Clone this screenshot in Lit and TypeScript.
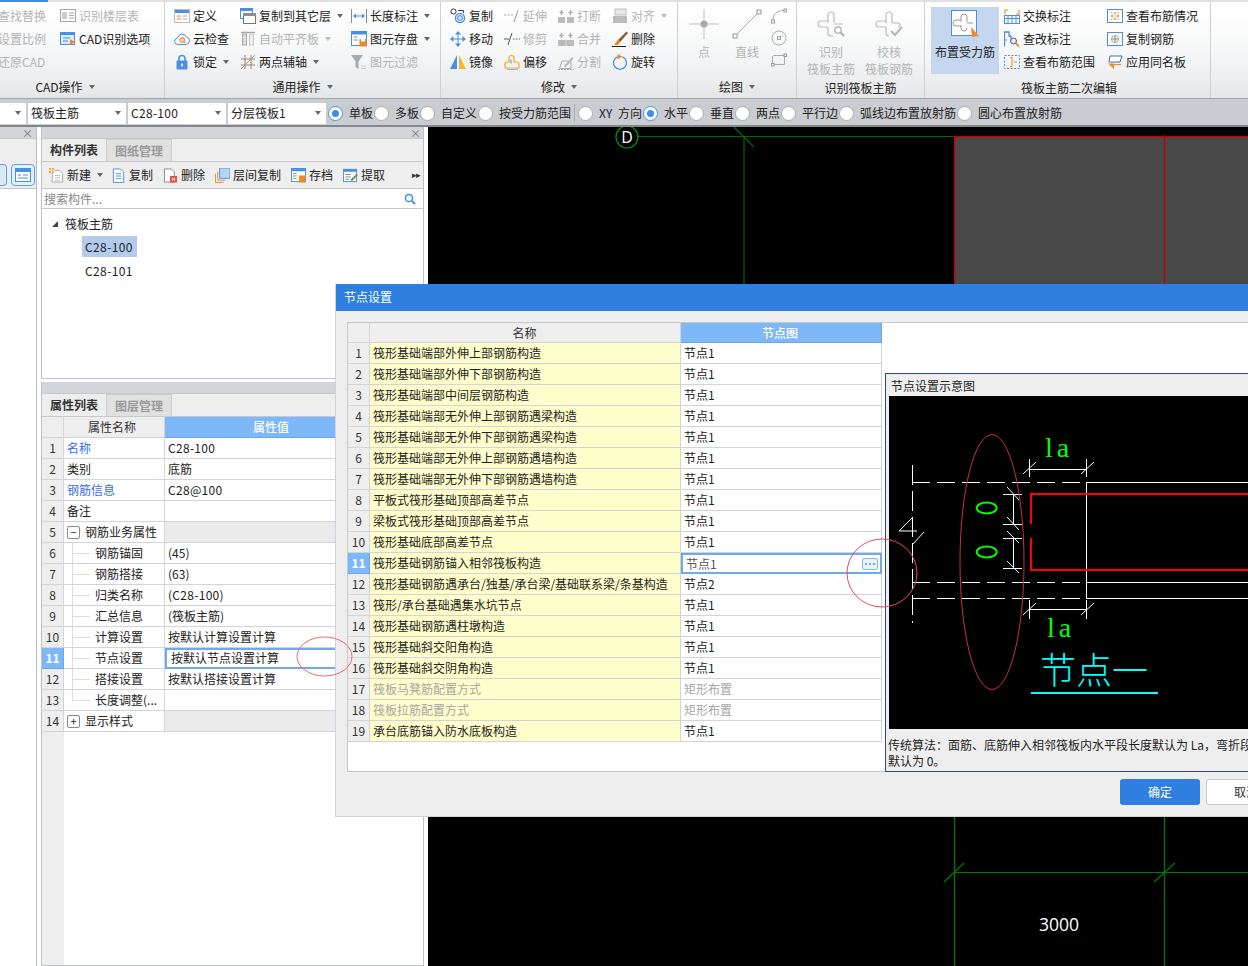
import { LitElement, html, css, nothing } from "lit";
import { customElement } from "lit/decorators.js";

const B = "#4a90e2", O = "#f0882a", G = "#a8a8a8";

const ICONS: Record<string, any> = {
  floor: html`<svg class="i" viewBox="0 0 16 16" fill="none"><rect x=".5" y="1.5" width="15" height="12" stroke="${G}"/><rect x="2" y="4" width="5" height="7" fill="#ccc"/><path d="M9 5h5M9 7.5h5M9 10h5" stroke="${G}"/></svg>`,
  cadopt: html`<svg class="i" viewBox="0 0 16 16" fill="none"><rect x=".5" y="1.5" width="14" height="12" fill="#dbe9f9" stroke="${B}"/><rect x="0" y="1" width="15" height="3" fill="${B}"/><path d="M3 7h7M3 10h5" stroke="${B}"/><path d="M10 8l5 3-5 3z" fill="${O}"/></svg>`,
  def: html`<svg class="i" viewBox="0 0 16 16" fill="none"><rect x=".5" y="1.5" width="15" height="13" fill="#fff" stroke="#bbb"/><rect x="1" y="2" width="14" height="3" fill="${B}"/><path d="M3 8h4M3 11h4" stroke="${O}"/><path d="M9 8h4M9 11h4" stroke="#aaa"/></svg>`,
  cloud: html`<svg class="i" viewBox="0 0 16 16" fill="none"><path d="M4 13.5a3.2 3.2 0 0 1-.4-6.4A4.6 4.6 0 0 1 12.4 6a3.8 3.8 0 0 1-.2 7.5z" stroke="${B}"/><circle cx="8.2" cy="9" r="2.2" stroke="${O}" stroke-width="1.2"/><path d="M10 10.6l1.5 1.5" stroke="${O}" stroke-width="1.2"/></svg>`,
  lock: html`<svg class="i" viewBox="0 0 16 16" fill="none"><path d="M5 7V4.5a3 3 0 0 1 6 0V7" stroke="${B}" stroke-width="1.6"/><rect x="2.5" y="6.5" width="11" height="9" rx="1" fill="${B}"/><rect x="7.2" y="9.5" width="1.6" height="3" fill="#fff"/></svg>`,
  cplayer: html`<svg class="i" viewBox="0 0 16 16" fill="none"><rect x=".5" y=".5" width="12" height="10" fill="#fff" stroke="${B}"/><rect x="0" y="0" width="13" height="3" fill="${B}"/><rect x="3.5" y="5.5" width="12" height="10" fill="#fff" stroke="#777"/><rect x="3" y="5" width="13" height="3" fill="#8a8f95"/></svg>`,
  autoflat: html`<svg class="i" viewBox="0 0 16 16" fill="none"><path d="M1 1.5h14" stroke="${G}" stroke-width="1.4"/><rect x="2.5" y="3" width="4" height="11" fill="#ddd" stroke="${G}"/><rect x="9.5" y="3" width="4" height="11" fill="#eee" stroke="#c8c8c8"/></svg>`,
  axis: html`<svg class="i" viewBox="0 0 16 16" fill="none"><path d="M5 1v14M11 1v14M1 5h14M1 11h14" stroke="#888"/><path d="M1 15L15 1" stroke="${O}"/></svg>`,
  len: html`<svg class="i" viewBox="0 0 16 16" fill="none"><path d="M.5 1v14M15.5 1v14" stroke="#888"/><path d="M3 8h10" stroke="${B}"/><path d="M2 8l3-2.5v5zM14 8l-3-2.5v5z" fill="${B}"/></svg>`,
  save: html`<svg class="i" viewBox="0 0 16 16" fill="none"><rect x=".5" y=".5" width="15" height="14" fill="#fff" stroke="${B}"/><rect x="0" y="0" width="16" height="3.5" fill="${B}"/><path d="M2.5 6h4M2.5 9h4" stroke="#888"/><rect x="8.5" y="8" width="7" height="7.5" fill="${O}"/><rect x="10" y="8" width="4" height="2.5" fill="#fff"/></svg>`,
  filter: html`<svg class="i" viewBox="0 0 16 16" fill="none"><path d="M0 1h12L7.5 7.5V15l-3-2V7.5z" fill="#aaa"/><path d="M10 12h5M10 14.5h5" stroke="#ccc"/></svg>`,
  copy: html`<svg class="i" viewBox="0 0 16 16" fill="none"><circle cx="3.5" cy="3.5" r="2.6" stroke="#333"/><circle cx="10" cy="10" r="4.6" fill="#cfe2f8" stroke="${B}" stroke-width="1.3"/><circle cx="10" cy="10" r="2.4" stroke="${B}"/><path d="M8 2.5h5.5V5" stroke="#444"/></svg>`,
  extend: html`<svg class="i" viewBox="0 0 16 16" fill="none"><path d="M0 7h2M3.500 7h2M7 7h2" stroke="#aaa"/><path d="M10 14L14 2" stroke="#999"/></svg>`,
  trim: html`<svg class="i" viewBox="0 0 16 16" fill="none"><path d="M0 8h5M9 8h1.500M12 8h1.500M15 8h1" stroke="#555"/><path d="M4 14L8 2" stroke="#555"/></svg>`,
  brk: html`<svg class="i" viewBox="0 0 16 16" fill="none"><rect x="0" y="9" width="7" height="6" fill="#bbb"/><rect x="9" y="9" width="7" height="6" fill="#bbb"/><path d="M3.500 2v5M12.500 2v5M1.500 4.500h4M10.500 4.500h4" stroke="#aaa" stroke-width="1.300"/></svg>`,
  merge: html`<svg class="i" viewBox="0 0 16 16" fill="none"><rect x="0" y="9" width="16" height="6" fill="#bbb"/><path d="M8 9v6" stroke="#ddd"/><path d="M3.500 2v5M12.500 2v5M1.500 4.500h4M10.500 4.500h4" stroke="#aaa" stroke-width="1.300"/></svg>`,
  split: html`<svg class="i" viewBox="0 0 16 16" fill="none"><path d="M1.500 14.500L4 7h9v7.500z" stroke="#aaa"/><path d="M6 12L14 3l1.500 1.500-8 9z" fill="#bbb"/><path d="M0 15.500h16" stroke="#aaa" stroke-dasharray="2 1"/></svg>`,
  align: html`<svg class="i" viewBox="0 0 16 16" fill="none"><rect x="3" y="1" width="11" height="6" fill="#e8e8e8" stroke="#bbb"/><rect x="1" y="8" width="14" height="7" fill="#bbb"/></svg>`,
  move: html`<svg class="i" viewBox="0 0 16 16" fill="none"><path d="M8 3v10M3 8h10" stroke="${B}"/><path d="M8 0l3 3.500H5zM8 16l3-3.500H5zM0 8l3.500-3v6zM16 8l-3.500-3v6z" fill="${B}"/></svg>`,
  mirror: html`<svg class="i" viewBox="0 0 16 16" fill="none"><path d="M7 1v14H0z" fill="${B}"/><path d="M9 1v14h7z" fill="#f5b62a"/></svg>`,
  offset: html`<svg class="i" viewBox="0 0 16 16" fill="none"><path d="M1 14V10c0-1.500 1-2 3-2h1V4a2.500 2.500 0 0 1 5 0v4h2c2 0 3 .5 3 2v4z" stroke="#f5a623" stroke-width="1.200"/><path d="M3 16h11" stroke="${B}" stroke-width="1.200"/><path d="M7 5.500v4" stroke="${B}"/></svg>`,
  del: html`<svg class="i" viewBox="0 0 16 16" fill="none"><path d="M14.500.5L6 9l2 2 8-9z" fill="#8a5a2b"/><path d="M6 8.500l2.500 2.500-2.500 3H2z" fill="${O}"/><path d="M0 15.500h14" stroke="#222"/></svg>`,
  rotate: html`<svg class="i" viewBox="0 0 16 16" fill="none"><path d="M5.500 2.800a6.500 6.500 0 1 0 5 0" stroke="${B}" stroke-width="1.300"/><path d="M5.500 0l5 2.600-5 2.800z" fill="${O}"/></svg>`,
  small1: html`<svg class="i" viewBox="0 0 16 16" fill="none"><path d="M2 12C2 6 6 2.500 13 2.500" stroke="#aaa"/><rect x=".5" y="12" width="3" height="3" fill="#fff" stroke="#999"/><rect x="13" y="1" width="2.600" height="3" fill="#fff" stroke="#999"/></svg>`,
  small2: html`<svg class="i" viewBox="0 0 16 16" fill="none"><circle cx="8" cy="8" r="7" stroke="#aaa"/><path d="M8 8l4-3" stroke="#bbb"/><rect x="6.600" y="6.600" width="2.800" height="2.800" fill="#fff" stroke="#999"/></svg>`,
  small3: html`<svg class="i" viewBox="0 0 16 16" fill="none"><path d="M2.500 3.500H14M13.500 3v9.500H1.500V4" stroke="#aaa"/><rect x=".5" y="11.500" width="2.500" height="2.500" fill="#fff" stroke="#999"/><rect x="13" y="2" width="2.500" height="2.500" fill="#fff" stroke="#999"/></svg>`,
  xchg: html`<svg class="i" viewBox="0 0 16 16" fill="none"><rect x=".5" y="7.500" width="15" height="8" stroke="${B}"/><path d="M.5 10.500h15M4 8v7M8 8v7M12 8v7" stroke="${B}"/><path d="M1 6V2h3M15 2v4h-3" stroke="${O}" stroke-width="1.200"/></svg>`,
  chg: html`<svg class="i" viewBox="0 0 16 16" fill="none"><path d="M.5 15.500V1H5v4h2v3" stroke="${B}" stroke-width="1.300"/><path d="M.5 9H3" stroke="${B}"/><circle cx="9.500" cy="10" r="3" fill="#dbe9f9" stroke="#557"/><path d="M12 12.500l3 3" stroke="${O}" stroke-width="1.800"/></svg>`,
  range: html`<svg class="i" viewBox="0 0 16 16" fill="none"><rect x=".5" y="1.500" width="15" height="13" stroke="${B}" stroke-dasharray="2 1.500"/><path d="M6 3.500H8V12.500H6M10 8h3" stroke="${O}"/></svg>`,
  cond: html`<svg class="i" viewBox="0 0 16 16" fill="none"><rect x=".5" y="1.500" width="15" height="13" stroke="${B}"/><path d="M8 4v2.500M8 9.500V12M4 8h2.500M9.500 8H12" stroke="${O}" stroke-width="1.300"/><path d="M4 4l1.500 1.500M12 4l-1.500 1.500M4 12l1.500-1.500M12 12l-1.500-1.500" stroke="${O}"/></svg>`,
  cpreb: html`<svg class="i" viewBox="0 0 16 16" fill="none"><rect x=".5" y="1.500" width="15" height="13" stroke="${B}"/><path d="M8 4v8M4 8h8" stroke="#888"/><circle cx="8" cy="8" r="3.500" stroke="#aaa"/></svg>`,
  apply: html`<svg class="i" viewBox="0 0 16 16" fill="none"><path d="M3 2h12l-2 6H2z" fill="#fff" stroke="#3c6fb5"/><path d="M1 9.500h6V15z" fill="${O}"/><path d="M7 10.500h7" stroke="${O}" stroke-width="1.200"/></svg>`,
  pnew: html`<svg class="i" viewBox="0 0 16 16" fill="none"><path d="M3.500 2.500H11l3.500 3.500v9h-11z" fill="#fff" stroke="#aaa"/><path d="M6 8h6M6 10.500h6M6 13h6" stroke="#bbb"/><rect x="0" y="0" width="5.500" height="5.500" fill="#f7a74a"/><path d="M0 2.700h5.500M2.700 0v5.500" stroke="#fff" stroke-width=".8"/></svg>`,
  pcopy: html`<svg class="i" viewBox="0 0 16 16" fill="none"><path d="M2.500 1H10l3.500 3.500v11h-11z" fill="#fff" stroke="${B}"/><path d="M5 6h6M5 8.500h6M5 11h6" stroke="${B}"/></svg>`,
  pdel: html`<svg class="i" viewBox="0 0 16 16" fill="none"><path d="M1.500 1H9l3 3v11H1.500z" fill="#fff" stroke="#888"/><rect x="7.500" y="8.500" width="7.500" height="7" fill="#d9534f"/><path d="M9.500 10.500l3.500 3M13 10.500l-3.500 3" stroke="#fff"/></svg>`,
  pfloor: html`<svg class="i" viewBox="0 0 16 16" fill="none"><path d="M.5 6v9.500H9M3 4v9h8" stroke="${O}"/><rect x="5" y="0" width="11" height="11" fill="#b8d4f5" stroke="${B}"/></svg>`,
  parch: html`<svg class="i" viewBox="0 0 16 16" fill="none"><rect x=".5" y=".5" width="15" height="14" fill="#fff" stroke="${B}"/><rect x="0" y="0" width="16" height="3.500" fill="${B}"/><path d="M2 6h4M2 8.500h4M2 11h4" stroke="#888"/><rect x="8.500" y="8" width="7" height="7.500" fill="${O}"/></svg>`,
  pget: html`<svg class="i" viewBox="0 0 16 16" fill="none"><rect x=".5" y="1.500" width="14" height="13" fill="#fff" stroke="${B}"/><rect x="0" y="1" width="15" height="3" fill="${B}"/><path d="M2.500 7h6M2.500 9.500h6M2.500 12h4" stroke="#888"/><path d="M8 12.500L14.500 6l1.500 1.500L9.500 14z" fill="#6a8f5a"/></svg>`,
};

const BIG: Record<string, any> = {
  point: html`<svg class="big" viewBox="0 0 30 30" fill="none"><path d="M15 0v30M0 15h30" stroke="#bdbdbd"/><circle cx="15" cy="15" r="3.500" fill="#aaa"/></svg>`,
  line: html`<svg class="big" viewBox="0 0 30 30" fill="none"><path d="M3 27L27 3" stroke="#aaa"/><rect x="1" y="25" width="4" height="4" fill="#fff" stroke="#999"/><rect x="25" y="1" width="4" height="4" fill="#fff" stroke="#999"/></svg>`,
  ident: html`<svg class="mid" viewBox="0 0 26 26" fill="none"><path d="M10 12V4a3 3 0 0 1 6 0v8M10 16v6a3 3 0 0 0 3 3h2M3 10h7M3 16h7M3 10a3 3 0 0 0 0 6M16 13h9" stroke="#bbb" stroke-width="1.200"/><circle cx="20" cy="19" r="3.200" stroke="#aaa" stroke-width="1.200"/><path d="M22.500 21.500L26 25" stroke="#999" stroke-width="1.600"/></svg>`,
  check: html`<svg class="mid" viewBox="0 0 26 26" fill="none"><path d="M10 12V4a3 3 0 0 1 6 0v8M10 16v6a3 3 0 0 0 3 3M3 10h7M3 16h7M3 10a3 3 0 0 0 0 6M16 12h6a2 2 0 0 1 0 4" stroke="#bbb" stroke-width="1.200"/><path d="M15 20l4 4 7-8" stroke="#b5b5b5" stroke-width="2"/></svg>`,
  place: html`<svg class="mid place" viewBox="0 0 26 26" fill="none"><rect x=".5" y=".5" width="25" height="25" fill="#fff" stroke="${B}"/><path d="M10 12V7a3 3 0 0 1 6 0v5M10 15v3a3 3 0 0 0 6 0M5 10h5M5 16h5M5 10a3 3 0 0 0 0 6M16 13h6" stroke="#999"/><path d="M20 17L28 26L21 27z" fill="${O}"/></svg>`,
};

type It = [string, string, boolean?, boolean?];

const name1 = ["筏形基础端部外伸上部钢筋构造","筏形基础端部外伸下部钢筋构造","筏形基础端部中间层钢筋构造","筏形基础端部无外伸上部钢筋遇梁构造","筏形基础端部无外伸下部钢筋遇梁构造","筏形基础端部无外伸上部钢筋遇墙构造","筏形基础端部无外伸下部钢筋遇墙构造","平板式筏形基础顶部高差节点","梁板式筏形基础顶部高差节点","筏形基础底部高差节点","筏形基础钢筋锚入相邻筏板构造","筏形基础钢筋遇承台/独基/承台梁/基础联系梁/条基构造","筏形/承台基础遇集水坑节点","筏形基础钢筋遇柱墩构造","筏形基础斜交阳角构造","筏形基础斜交阴角构造","筏板马凳筋配置方式","筏板拉筋配置方式","承台底筋锚入防水底板构造"];

const radios: [string, boolean, boolean?][] = [["单板",true],["多板",false],["自定义",false],["按受力筋范围",false,true],["XY 方向",false],["水平",true],["垂直",false],["两点",false],["平行边",false],["弧线边布置放射筋",false],["圆心布置放射筋",false]];

const props: any[] = [
  [1,"名称","C28-100","link"],[2,"类别","底筋"],[3,"钢筋信息","C28@100","link"],[4,"备注",""],
  [5,"钢筋业务属性","","minus"],[6,"钢筋锚固","(45)","child"],[7,"钢筋搭接","(63)","child"],[8,"归类名称","(C28-100)","child"],
  [9,"汇总信息","(筏板主筋)","child"],[10,"计算设置","按默认计算设置计算","child"],[11,"节点设置","按默认节点设置计算","child sel"],
  [12,"搭接设置","按默认搭接设置计算","child"],[13,"长度调整(...","","child last"],[14,"显示样式","","plus"],
];

@customElement("app-root")
export class AppRoot extends LitElement {
  static styles = css`
    :host{display:block;position:relative;width:1248px;height:966px;overflow:hidden;background:#fff;color:#222;
      font:12px/16px "Noto Sans CJK SC","Noto Sans",sans-serif;}
    *{box-sizing:border-box}
    .i{width:16px;height:16px;flex:none;display:block}
    .big{width:30px;height:30px;display:block}
    .mid{width:26px;height:26px;display:block;overflow:visible}
    .tri{width:0;height:0;border:3px solid transparent;border-top:4px solid #666;border-bottom:0;display:inline-block;flex:none}

    .ribbon{height:99px;width:1290px;margin-left:-30px;padding-top:2px;display:flex;position:relative;
      background:linear-gradient(#fff 10%,#f4f5f6 60%,#e4e6e8);border-bottom:1px solid #a2a5aa}
    .strip{position:absolute;left:0;top:0;width:100%;height:2px;background:#e0e0e0}
    .strip i{display:block;height:2px;width:78px;background:#3d8be6}
    .grp{display:flex;flex-direction:column;height:96px;border-right:1px solid #cdd1d5;flex:none;position:relative;z-index:1}
    .body{height:76px;display:flex}
    .glabel{height:18px;line-height:18px;display:flex;align-items:center;justify-content:center;gap:6px;color:#222}
    .col{display:flex;flex-direction:column;padding-top:2px;flex:none}
    .it{height:23px;display:flex;align-items:center;gap:3px;white-space:nowrap}
    .it .tri{margin-left:3px}
    .dis{color:#b4b4b4}
    .dis .tri{border-top-color:#bbb}
    .g1{width:195px}.g1 .c1{width:81px;margin-left:9px}
    .g1 .glabel{padding-right:4px}
    .g2{width:276px;padding-left:9px}.g2 .c1{width:66px}.g2 .c2{width:111px}
    .g2 .glabel,.g3 .glabel{margin-left:-9px}
    .g3{width:237px;padding-left:9px}.g3 .col{width:54px}
    .g4{width:119px;padding-left:11px}
    .g4 .glabel{margin-left:-11px}
    .bigb{display:flex;flex-direction:column;align-items:center;width:30px;padding-top:7px;flex:none}
    .bigb span{margin-top:5px;white-space:nowrap;color:#b4b4b4}
    .bigb.second{margin-left:13px}
    .smalls{margin-left:9px;padding-top:6px;display:flex;flex-direction:column;gap:6px;flex:none}
    .g5{width:128px;padding-left:5px}
    .g5 .glabel{margin-left:-5px}
    .midb{width:58px;display:flex;flex-direction:column;align-items:center;padding-top:9px;color:#b4b4b4;flex:none;line-height:17px;text-align:center}
    .midb .mid{margin-bottom:6px}
    .g6{width:286px;padding-left:6px}
    .g6 .glabel{margin-left:-3px}
    .active{width:68px;height:67px;margin-top:5px;background:#c5d7ef;display:flex;flex-direction:column;align-items:center;padding-top:3px;flex:none;white-space:nowrap}
    .active .mid{margin-bottom:8px;margin-left:-2px}
    .g6 .c1{width:103px;margin-left:5px}
    .lb2{padding-top:1px}

    .tb{height:28px;background:#c9ccd1;display:flex;align-items:center;padding:2px 0 0;border-bottom:2px solid #85878b}
    .sel{height:21px;width:98px;background:#fff;margin-right:2px;display:flex;align-items:center;justify-content:space-between;padding:0 5px 0 3px;white-space:nowrap;flex:none}
    .sel.first{width:26px}
    .radios{display:flex;align-items:center}
    .radio{width:15px;height:15px;border-radius:50%;background:#fff;border:1px solid #a8abb0;flex:none;display:flex;align-items:center;justify-content:center;margin-right:6px}
    .radio.on{border:1px solid #4a90e2}
    .radio.on::after{content:"";width:7px;height:7px;border-radius:50%;background:#3f8cf0}
    .rt{white-space:nowrap;margin-right:1px;word-spacing:3px}
    .rsep{width:1px;height:18px;background:#a9acb0;margin:0 3px 0 2px}

    .main{display:flex;height:839px}
    .lp{width:37px;flex:none;border-right:1px solid #b9bcc1;display:flex;flex-direction:column}
    .phead{height:12px;background:#d3d5da;display:flex;align-items:center;justify-content:flex-end;padding-right:3px;color:#777;font-size:11px;flex:none;border-bottom:1px solid #c6c8cc;line-height:10px}
    .lpbar{height:50px;background:#eee;border-bottom:1px solid #c4c6ca;display:flex;align-items:flex-start;padding:25px 0 0;gap:4px;margin-left:-1px;flex:none}
    .lbtn{height:22px;border:1px solid #5a9eea;border-radius:4px;background:#fff;display:flex;align-items:center;justify-content:center;flex:none}
    .lbtn.a{width:8px;background:#dbe9f9;border-left:0;border-radius:0 4px 4px 0}
    .lbtn.b{width:24px;background:#e6f0fb}
    .lbtn svg{width:16px;height:14px}
    .pcol{width:383px;flex:none;margin-left:4px;display:flex;flex-direction:column}
    .panel{border:1px solid #bfc2c6;border-top:0;display:flex;flex-direction:column}
    .p1{height:252px;flex:none}
    .p1 .phead{padding-right:2px}
    .p2{flex:1;margin-top:3px;min-height:0}
    .tabs{height:23px;background:#eee;display:flex;border-bottom:1px solid #c6c8cc;flex:none}
    .tab{height:22px;padding:0 8px;line-height:21px;font-weight:700;color:#333;width:64px;flex:none;white-space:nowrap}
    .tab.off{background:#e1e1e1;color:#999;border:1px solid #cdcdcd;border-bottom:0;width:66px}
    .ptool{height:27px;background:#eee;border-bottom:1px solid #c6c8cc;display:flex;align-items:center;flex:none;padding-left:7px}
    .pt{display:flex;align-items:center;white-space:nowrap;flex:none;margin-right:10px}
    .pt span{margin-left:3px}
    .pt .i{width:15px;height:15px}
    .pt .tri{margin-left:6px;margin-right:-2px}
    .more{margin-left:auto;margin-right:3px;font-size:9px;color:#333;letter-spacing:-1px}
    .search{height:20px;background:#fff;border-bottom:1px solid #c6c8cc;display:flex;align-items:center;justify-content:space-between;color:#888;padding:0 7px 0 2px;flex:none}
    .search svg{width:12px;height:12px}
    .tree{flex:1;background:#fff;padding:4px 0 0;display:flex;flex-direction:column;gap:3px}
    .tr{height:21px;line-height:21px;display:flex;align-items:center;flex:none}
    .tr.root{padding-left:10px;gap:7px;margin-bottom:-1px}
    .tr.root::before{content:"";width:0;height:0;border-style:solid;border-width:0 0 6px 6px;border-color:transparent transparent #444 transparent}
    .tr.leaf{margin-left:40px;width:55px;padding-left:3px;letter-spacing:.4px}
    .tr.leaf.on{background:#b3ccee}

    .grid{flex:1;min-height:0;background:linear-gradient(90deg,#eee 22px,#fff 22px);display:flex;flex-direction:column;overflow:hidden}
    .row{display:flex;height:21px;flex:none}
    .row>div{border-bottom:1px solid #d2d4d8;border-right:1px solid #d2d4d8;line-height:20px;white-space:nowrap;overflow:hidden}
    .num{width:22px;flex:none;background:#eee;text-align:center;color:#333}
    .hd .num,.hd .n,.hd .v{background:#eee;color:#333;text-align:center}
    .hd .v{background:#7fb8f8;color:#fff;border-color:#6aa6ec;font-weight:500}
    .n{width:101px;flex:none;padding-left:3px;display:flex;align-items:center}
    .v{flex:1;padding-left:3px;min-width:0}
    .grid .hd .v{padding:0 45px 0 0}
    .grid .hd .n{justify-content:center;padding:0 4px 0 0}
    .link .n{color:#3a6cec}
    .num.hl{background:#7fb8f8;color:#fff;font-weight:700;border-color:#6aa6ec}
    .v.edit{border:2px solid #6ea9ea;padding-left:4px;line-height:16px}
    .v.g{background:#ebebeb}
    .box{width:13px;height:13px;border:1px solid #888;border-radius:2px;margin:0 5px 0 0;display:flex;align-items:center;justify-content:center;background:#fff;flex:none;font-size:11px;line-height:10px}
    .tl{width:18px;height:21px;margin:0 5px 0 5px;border-left:1px solid #ddd;background:linear-gradient(#ddd,#ddd) 0 10px/100% 1px no-repeat;flex:none}
    .tl.last{height:11px;align-self:flex-start}
    .lat{letter-spacing:.3px}

    .canvas{flex:1;margin-left:4px;background:#000;min-width:0}
    .canvas svg{display:block;width:820px;height:839px}

    .dlg{position:absolute;left:335px;top:284px;width:960px;height:533px;background:#eee;border-left:1px solid #cfd3db;border-bottom:1px solid #cfd3db;display:flex;flex-direction:column}
    .dt{height:27px;background:#2e7fe0;color:#fff;line-height:26px;padding-left:8px;flex:none}
    .dbody{margin:11px 0 0 11px;height:450px;background:#fff;border:1px solid #c8c8c8;display:flex;flex:none}
    .dtable{width:534px;flex:none}
    .dtable .hd{height:20px}
    .dtable .n{width:311px;background:#ffc;padding-left:3px}
    .dtable .hd .n{background:#eee;justify-content:center;padding-right:4px}
    .dtable .v{background:#fff;padding-left:3px}
    .dtable .hd .v{background:#7fb8f8;padding:0 2px 0 0}
    .dtable .v.edit{padding-left:3px;color:#555;display:flex;align-items:center;justify-content:space-between;padding-right:2px}
    .mut{color:#a6a6a6}
    .ell{width:16px;height:12px;border:1px solid #7fb8f8;border-radius:2px;background:#eaf3fd;display:flex;align-items:center;justify-content:center;gap:2px;flex:none}
    .ell i{width:2px;height:2px;background:#4a90e2;border-radius:50%}
    .schem{margin:50px 0 0 3px;width:420px;height:399px;border:1px solid #2b4a7d;border-right:0;background:#eee;display:flex;flex-direction:column;flex:none}
    .ttl{height:22px;line-height:24px;padding-left:5px;flex:none}
    .schem svg{display:block;width:417px;height:333px;margin-left:3px;background:#000;flex:none}
    .desc{padding:8px 0 0 2px;white-space:nowrap}
    .desc div{height:16px}
    .dbtns{display:flex;gap:6px;margin:7px 0 0 784px}
    .btn{width:80px;height:26px;border-radius:3px;text-align:center;line-height:26px;background:#2e7fe0;color:#fff;flex:none}
    .btn.w{background:#fff;color:#333;border:1px solid #ccc;line-height:24px}
    .over{position:absolute;left:0;top:0;width:1248px;height:966px;pointer-events:none}
  `;

  item(it: It) {
    const [ic, t, dis, arrow] = it;
    return html`<div class="it ${dis ? "dis" : ""}">${ICONS[ic]}<span>${t}</span>${arrow ? html`<i class="tri"></i>` : nothing}</div>`;
  }
  col(cls: string, items: It[]) {
    return html`<div class="col ${cls}">${items.map((x) => this.item(x))}</div>`;
  }

  ribbon() {
    return html`<div class="ribbon">
      <div class="strip"><i></i></div>
      <div class="grp g1"><div class="body">
        ${this.col("c1", [["floor","查找替换",true],["floor","设置比例",true],["floor","还原CAD",true]])}
        ${this.col("c2", [["floor","识别楼层表",true],["cadopt","CAD识别选项"]])}
      </div><div class="glabel">CAD操作<i class="tri"></i></div></div>
      <div class="grp g2"><div class="body">
        ${this.col("c1", [["def","定义"],["cloud","云检查"],["lock","锁定",false,true]])}
        ${this.col("c2", [["cplayer","复制到其它层",false,true],["autoflat","自动平齐板",true,true],["axis","两点辅轴",false,true]])}
        ${this.col("c3", [["len","长度标注",false,true],["save","图元存盘",false,true],["filter","图元过滤",true]])}
      </div><div class="glabel">通用操作<i class="tri"></i></div></div>
      <div class="grp g3"><div class="body">
        ${this.col("", [["copy","复制"],["move","移动"],["mirror","镜像"]])}
        ${this.col("", [["extend","延伸",true],["trim","修剪",true],["offset","偏移"]])}
        ${this.col("", [["brk","打断",true],["merge","合并",true],["split","分割",true]])}
        ${this.col("", [["align","对齐",true,true],["del","删除"],["rotate","旋转"]])}
      </div><div class="glabel">修改<i class="tri"></i></div></div>
      <div class="grp g4"><div class="body">
        <div class="bigb">${BIG.point}<span>点</span></div>
        <div class="bigb second">${BIG.line}<span>直线</span></div>
        <div class="smalls">${ICONS.small1}${ICONS.small2}${ICONS.small3}</div>
      </div><div class="glabel">绘图<i class="tri"></i></div></div>
      <div class="grp g5"><div class="body">
        <div class="midb">${BIG.ident}<span>识别<br>筏板主筋</span></div>
        <div class="midb">${BIG.check}<span>校核<br>筏板钢筋</span></div>
      </div><div class="glabel lb2">识别筏板主筋</div></div>
      <div class="grp g6"><div class="body">
        <div class="active">${BIG.place}<span>布置受力筋</span></div>
        ${this.col("c1", [["xchg","交换标注"],["chg","查改标注"],["range","查看布筋范围"]])}
        ${this.col("c2", [["cond","查看布筋情况"],["cpreb","复制钢筋"],["apply","应用同名板"]])}
      </div><div class="glabel lb2">筏板主筋二次编辑</div></div>
    </div>`;
  }

  toolbar() {
    return html`<div class="tb">
      <div class="sel first"><span></span><i class="tri"></i></div>
      <div class="sel"><span>筏板主筋</span><i class="tri"></i></div>
      <div class="sel"><span class="lat">C28-100</span><i class="tri"></i></div>
      <div class="sel"><span>分层筏板1</span><i class="tri"></i></div>
      <div class="radios">
        ${radios.map(([t, on, sep]) => html`<i class="radio ${on ? "on" : ""}"></i><span class="rt">${t}</span>${sep ? html`<i class="rsep"></i>` : nothing}`)}
      </div>
    </div>`;
  }

  propTable() {
    return html`<div class="grid">
      <div class="row hd"><div class="num"></div><div class="n">属性名称</div><div class="v">属性值</div></div>
      ${props.map(([i, n, v, k]) => {
        const kk = k || "";
        const child = kk.includes("child"), sel = kk.includes("sel"), grp = kk === "minus" || kk === "plus";
        return html`<div class="row ${kk === "link" ? "link" : ""}">
          <div class="num ${sel ? "hl" : ""}">${i}</div>
          <div class="n">
            ${grp ? html`<span class="box">${kk === "minus" ? "−" : "+"}</span>` : nothing}
            ${child ? html`<i class="tl ${kk.includes("last") ? "last" : ""}"></i>` : nothing}
            <span>${n}</span>
          </div>
          <div class="v ${sel ? "edit" : ""} ${grp ? "g" : ""} ${i === 1 || i === 3 || i === 8 ? "lat" : ""}">${v}</div>
        </div>`;
      })}
    </div>`;
  }

  canvas() {
    const g = "#007a00";
    return html`<div class="canvas"><svg viewBox="428 127 820 839" fill="none">
      <rect x="954" y="137" width="300" height="150" fill="#484848"/>
      <path d="M637 136.500H954M744 137V290M734 127L754 147" stroke="#006a00" stroke-width="1.200"/>
      <path d="M954 136.500H1248M954.500 137V290M1164.500 137V290" stroke="#c40000" stroke-width="1.400"/>
      <circle cx="627" cy="137" r="11" stroke="#0a8a0a" stroke-width="1.200"/>
      <text x="627" y="143" fill="#fff" font-size="16" text-anchor="middle" font-family="Open Sans,sans-serif">D</text>
      <path d="M954.500 810V966M1164.500 810V966M954 872.500H1248M944 882L964 863M1154 882L1175 863" stroke="${g}" stroke-width="1.200"/>
      <text x="1059" y="931" fill="#fff" font-size="17.500" text-anchor="middle" font-family="Open Sans,sans-serif">3000</text>
    </svg></div>`;
  }

  schematic() {
    return html`<svg viewBox="889 396 417 333" fill="none">
      <g stroke="#fff" stroke-width="1">
        <path d="M912.500 465V623" stroke-dasharray="20 6"/>
        <path d="M912 482.500H1086" stroke-dasharray="18 7"/>
        <path d="M912 582.500H1086" stroke-dasharray="18 7"/>
        <path d="M912 598.500H1086" stroke-dasharray="18 7"/>
        <path d="M1086 482.500H1310M1086 582.500H1310M1086 598.500H1310M1086.500 482V598M1086.500 600V619M1029.500 459V477M1086.500 459V477M1029.500 600V619"/>
        <path d="M1029 469.500H1087M1029 609.500H1087M1023 474L1036 462M1081 474L1094 462M1023 615L1036 603M1081 615L1094 603"/>
        <path d="M1003 494.500H1022M1003 524.500H1022M1003 538.500H1022M1003 568.500H1022M1013.500 494V524M1013.500 538V568M1007 487L1019 500M1007 517L1019 530M1007 531L1019 543M1007 561L1019 573"/>
        <path d="M899 531L912 518M899 531H917M912 545L924 532"/>
      </g>
      <path d="M1031 524V494H1310M1031 538V570H1310" stroke="#f00" stroke-width="2"/>
      <ellipse cx="986.700" cy="508" rx="10" ry="5.500" stroke="#0f0" stroke-width="2"/>
      <ellipse cx="986.700" cy="552" rx="10" ry="5.500" stroke="#0f0" stroke-width="2"/>
      <text x="1045" y="457" fill="#0f0" font-size="28" letter-spacing="4" font-family="Liberation Serif,serif">la</text>
      <text x="1047" y="637" fill="#0f0" font-size="28" letter-spacing="4" font-family="Liberation Serif,serif">la</text>
      <text x="1040" y="684" fill="#0ff" font-size="36" font-family="Noto Sans CJK SC,sans-serif" font-weight="300">节点一</text>
      <path d="M1031 693H1158" stroke="#0ff" stroke-width="2"/>
    </svg>`;
  }

  dialog() {
    return html`<div class="dlg">
      <div class="dt">节点设置</div>
      <div class="dbody">
        <div class="dtable">
          <div class="row hd"><div class="num"></div><div class="n">名称</div><div class="v">节点图</div></div>
          ${name1.map((n, idx) => {
            const i = idx + 1, mut = i === 17 || i === 18, sel = i === 11;
            const v = mut ? "矩形布置" : i === 12 ? "节点2" : "节点1";
            return html`<div class="row">
              <div class="num ${sel ? "hl" : ""}">${i}</div>
              <div class="n ${mut ? "mut" : ""}">${n}</div>
              <div class="v ${sel ? "edit" : ""} ${mut ? "mut" : ""}">${sel ? html`<span>${v}</span><span class="ell"><i></i><i></i><i></i></span>` : v}</div>
            </div>`;
          })}
        </div>
        <div class="schem">
          <div class="ttl">节点设置示意图</div>
          ${this.schematic()}
          <div class="desc">
            <div>传统算法：面筋、底筋伸入相邻筏板内水平段长度默认为 La，弯折段长度</div>
            <div>默认为 0。</div>
          </div>
        </div>
      </div>
      <div class="dbtns"><div class="btn">确定</div><div class="btn w">取消</div></div>
    </div>`;
  }

  render() {
    return html`
      ${this.ribbon()}
      ${this.toolbar()}
      <div class="main">
        <div class="lp">
          <div class="phead">×</div>
          <div class="lpbar">
            <div class="lbtn a"></div>
            <div class="lbtn b"><svg viewBox="0 0 16 14" fill="none"><rect x=".5" y=".5" width="15" height="13" fill="#fff" stroke="#4a90e2"/><rect x="0" y="0" width="16" height="4" fill="#4a90e2"/><path d="M3 7h3M8 7h5M3 10h10" stroke="#4a90e2"/></svg></div>
          </div>
        </div>
        <div class="pcol">
          <div class="panel p1">
            <div class="phead">×</div>
            <div class="tabs"><div class="tab">构件列表</div><div class="tab off">图纸管理</div></div>
            <div class="ptool">
              <div class="pt">${ICONS.pnew}<span>新建</span><i class="tri"></i></div>
              <div class="pt">${ICONS.pcopy}<span>复制</span></div>
              <div class="pt">${ICONS.pdel}<span>删除</span></div>
              <div class="pt">${ICONS.pfloor}<span>层间复制</span></div>
              <div class="pt">${ICONS.parch}<span>存档</span></div>
              <div class="pt">${ICONS.pget}<span>提取</span></div>
              <span class="more">▸▸</span>
            </div>
            <div class="search"><span>搜索构件...</span><svg viewBox="0 0 12 12" fill="none"><circle cx="5" cy="5" r="3.600" stroke="#3d8fd1" stroke-width="1.500"/><path d="M7.800 7.800L11 11" stroke="#3d8fd1" stroke-width="1.800"/></svg></div>
            <div class="tree">
              <div class="tr root">筏板主筋</div>
              <div class="tr leaf on">C28-100</div>
              <div class="tr leaf">C28-101</div>
            </div>
          </div>
          <div class="panel p2">
            <div class="phead"></div>
            <div class="tabs"><div class="tab">属性列表</div><div class="tab off">图层管理</div></div>
            ${this.propTable()}
          </div>
        </div>
        ${this.canvas()}
      </div>
      ${this.dialog()}
      <svg class="over" viewBox="0 0 1248 966" fill="none">
        <ellipse cx="992" cy="562" rx="32" ry="127.500" stroke="#c8323a" stroke-width="1"/>
        <ellipse cx="882" cy="573" rx="35" ry="34" stroke="#e0505a" stroke-width="1"/>
        <ellipse cx="324.500" cy="656.500" rx="27.500" ry="19.500" stroke="#ea6a72" stroke-width="1"/>
      </svg>
    `;
  }
}
